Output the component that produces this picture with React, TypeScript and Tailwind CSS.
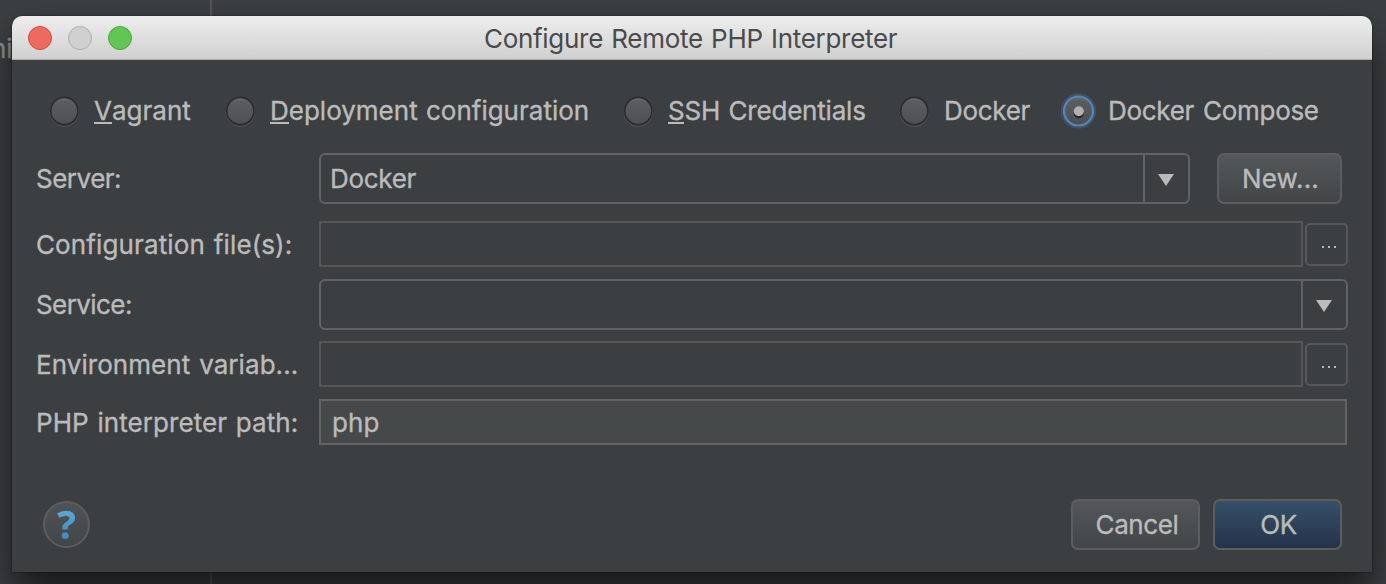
import type { ReactNode } from "react";

function Radio({ id, selected, className, children }: { id: string; selected?: boolean; className: string; children: ReactNode }) {
  return (
    <label className={`flex items-center ${className}`}>
      <svg width="40" height="40" viewBox="0 0 40 40" className="-mx-[6px] shrink-0">
        <defs>
          <linearGradient id={`face-${id}`} x1="0" y1="0" x2="0" y2="1">
            <stop offset="0" stopColor="#6c6f72" />
            <stop offset="0.15" stopColor="#595d60" />
            <stop offset="1" stopColor="#4c5052" />
          </linearGradient>
        </defs>
        {selected ? (
          <>
            <circle cx="20.5" cy="20" r="16.5" fill="none" stroke="#47729f" strokeOpacity="0.35" strokeWidth="2.4" />
            <circle cx="20.5" cy="20" r="14.5" fill={`url(#face-${id})`} stroke="#5187bf" strokeWidth="2.2" />
            <circle cx="20.8" cy="22.2" r="5" fill="#222" />
            <circle cx="20.8" cy="20.3" r="5" fill="#b0b0b0" />
          </>
        ) : (
          <>
            <circle cx="20.3" cy="21.3" r="14.2" fill="none" stroke="#525456" strokeWidth="1" />
            <circle cx="20.3" cy="20" r="13.6" fill={`url(#face-${id})`} stroke="#2b2c2d" strokeWidth="1.6" />
          </>
        )}
      </svg>
      <span className="ml-[16px] leading-[32px]">{children}</span>
    </label>
  );
}

function Mnemonic({ children }: { children: string }) {
  return <span className="inline-block h-[29px] border-b-2 border-[#bbbbbb] leading-[32px]">{children}</span>;
}

function Label({ className, children }: { className: string; children: string }) {
  return (
    <div className="w-[283px] shrink-0">
      <span className={`whitespace-nowrap ${className}`}>{children}</span>
    </div>
  );
}

function Combo({ className, children }: { className: string; children?: string }) {
  return (
    <div className={`flex h-[51px] rounded-[6px] border-2 border-[#616263] ${className}`}>
      <div className="flex flex-1 items-center border-r-2 border-[#616263] pl-[9px] tracking-[-0.3px]">{children}</div>
      <div className="flex w-[43px] items-center justify-center">
        <svg width="16" height="12" viewBox="0 0 16 12" className="mt-[3px] mr-[2px]">
          <path d="M0 0H16L8 12Z" fill="#bbbbbb" />
        </svg>
      </div>
    </div>
  );
}

function BrowseRow({ label, className }: { label: string; className: string }) {
  return (
    <div className="flex h-[46px] items-center">
      <Label className={className}>{label}</Label>
      <div className="h-[46px] w-[984px] border-2 border-[#555555]" />
      <button className="ml-[2px] flex h-[43px] w-[43px] items-center justify-center gap-[4px] rounded-[5px] border-2 border-[#555657] pt-[5px] pl-[4px]">
        <i className="size-[2px] bg-[#bbbbbb]" />
        <i className="size-[2px] bg-[#bbbbbb]" />
        <i className="size-[2px] bg-[#bbbbbb]" />
      </button>
    </div>
  );
}

function Button({ className, children }: { className: string; children: string }) {
  return (
    <button className={`flex h-[51px] items-center justify-center rounded-[7px] border-2 border-[#5b5d5e] bg-linear-to-b ${className}`}>
      {children}
    </button>
  );
}

export default function App() {
  return (
    <div className="relative h-[584px] w-[1386px] overflow-hidden bg-[#3c3f41] px-[12px] pt-[16px] font-['Inter','Liberation_Sans',sans-serif] text-[26px] text-[#bbbbbb] [-webkit-text-stroke:0.35px_currentColor]">
      <div className="absolute top-0 left-[210px] h-full w-[2px] bg-[#555555]" />
      <div className="absolute top-[33px] left-[-9px] leading-[32px] text-[#8c8e8f]">ni</div>
      <div className="relative flex h-[556px] w-[1360px] flex-col rounded-t-[10px] bg-[#3c3f41] shadow-[0_0_2px_rgba(0,0,0,0.7),0_22px_36px_rgba(0,0,0,0.6)]">
        <header className="flex h-[44px] shrink-0 items-center rounded-t-[10px] border-b border-[#aaaaaa] bg-linear-to-b from-[#eeeeee] to-[#d0d0d0] pl-[16px]">
          <div className="flex gap-[16px]">
            <i className="size-[24px] rounded-full border border-[#d9493f] bg-[#ee6a5f]" />
            <i className="size-[24px] rounded-full border border-[#b0b0b0] bg-[#d0d0d0]" />
            <i className="size-[24px] rounded-full border border-[#4aa73c] bg-[#61c654]" />
          </div>
          <h1 className="ml-[352px] pt-[2px] tracking-[-0.3px] whitespace-nowrap text-[#4a4a4a] [word-spacing:1.3px] [-webkit-text-stroke:0px]">Configure Remote PHP Interpreter</h1>
        </header>

        <div className="mt-[31px] flex h-[40px] shrink-0 items-center pl-[38px] whitespace-nowrap">
          <Radio id="vagrant" className="w-[176px] tracking-[0.02px]"><Mnemonic>V</Mnemonic>agrant</Radio>
          <Radio id="deployment" className="w-[398px] tracking-[0px] [word-spacing:1px]"><Mnemonic>D</Mnemonic>eployment configuration</Radio>
          <Radio id="ssh" className="w-[276px] tracking-[-0.2px] [word-spacing:1.3px]"><Mnemonic>S</Mnemonic>SH Credentials</Radio>
          <Radio id="docker" className="w-[164px] tracking-[-0.3px]">Docker</Radio>
          <Radio id="compose" selected className="tracking-[-0.3px] [word-spacing:2px]">Docker Compose</Radio>
        </div>

        <main className="mt-[22px] flex flex-col pl-[24px]">
          <div className="flex items-center">
            <Label className="tracking-[-0.5px]">Server:</Label>
            <Combo className="w-[871px]">Docker</Combo>
            <Button className="ml-[27px] w-[125px] from-[#53575a] to-[#424647] pl-[2px] tracking-[0.15px]">New...</Button>
          </div>
          <div className="mt-[17px]">
            <BrowseRow label="Configuration file(s):" className="tracking-[0.12px] [word-spacing:1.5px]" />
          </div>
          <div className="mt-[12px] flex items-center">
            <Label className="tracking-[-0.58px]">Service:</Label>
            <Combo className="w-[1029px]" />
          </div>
          <div className="mt-[11px]">
            <BrowseRow label="Environment variab..." className="tracking-[0.06px] [word-spacing:1.5px]" />
          </div>
          <div className="mt-[12px] flex h-[46px] items-center">
            <Label className="tracking-[0.07px] [word-spacing:1.3px]">PHP interpreter path:</Label>
            <div className="flex h-[46px] w-[1028px] items-center border-2 border-[#646464] bg-[#45494a] pl-[11px] tracking-[0.1px]">php</div>
          </div>
        </main>

        <footer className="mt-[54px] flex items-center pl-[31px]">
          <button className="flex size-[47px] items-center justify-center rounded-full border-2 border-[#5b5d5e] bg-linear-to-b from-[#4f5356] to-[#424647]">
            <span className="bg-linear-to-b from-[#62b1d8] to-[#3b82bd] bg-clip-text font-['Open_Sans',sans-serif] text-[39px] leading-[44px] font-bold text-transparent relative -top-[1px]">?</span>
          </button>
          <Button className="ml-[981px] w-[129px] from-[#53575a] to-[#424647] pl-[3px] tracking-[-0.4px]">Cancel</Button>
          <Button className="ml-[13px] w-[129px] from-[#365069] to-[#25334b] pl-[2px] tracking-[-0.3px]">OK</Button>
        </footer>
      </div>
    </div>
  );
}
